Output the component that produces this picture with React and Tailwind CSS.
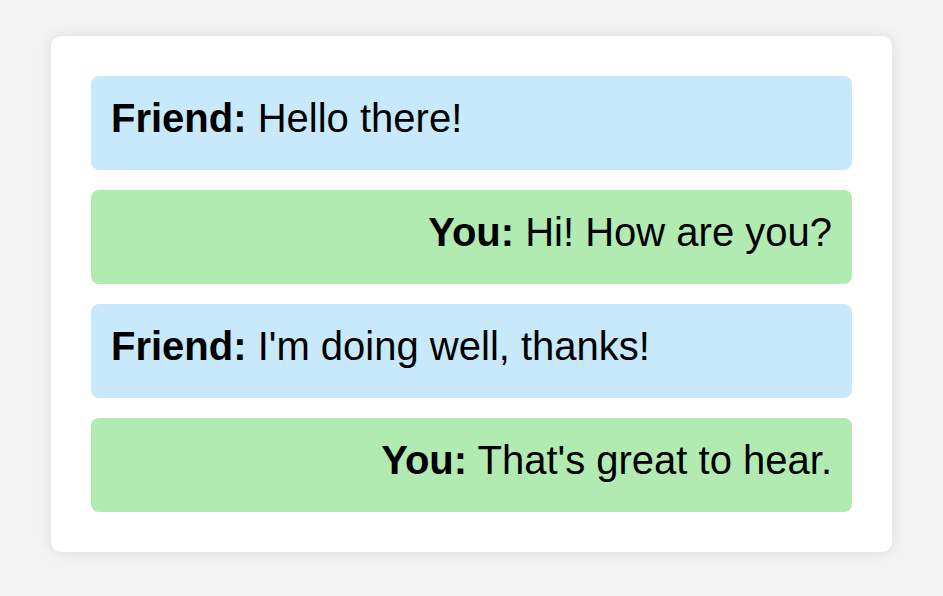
const messages = [
  { from: "Friend", text: "Hello there!" },
  { from: "You", text: "Hi! How are you?" },
  { from: "Friend", text: "I'm doing well, thanks!" },
  { from: "You", text: "That's great to hear." },
];

export default function App() {
  return (
    <div className="min-h-screen bg-[#f3f3f3] pt-9 font-['Liberation_Sans',Arial,sans-serif] text-black">
      <div className="mx-auto w-[841px] rounded-[10px] bg-white p-10 shadow-[0_0_14px_rgba(0,0,0,0.1)]">
        <div className="flex flex-col gap-5">
          {messages.map((m, i) => (
            <div
              key={i}
              className={`rounded-lg px-5 pt-[19px] pb-[29px] text-[40px] leading-[46px] ${
                m.from === "You" ? "bg-[#b1ebb1] text-right" : "bg-[#c7e9fb] text-left"
              }`}
            >
              <span className="font-bold">{m.from}:</span> {m.text}
            </div>
          ))}
        </div>
      </div>
    </div>
  );
}
